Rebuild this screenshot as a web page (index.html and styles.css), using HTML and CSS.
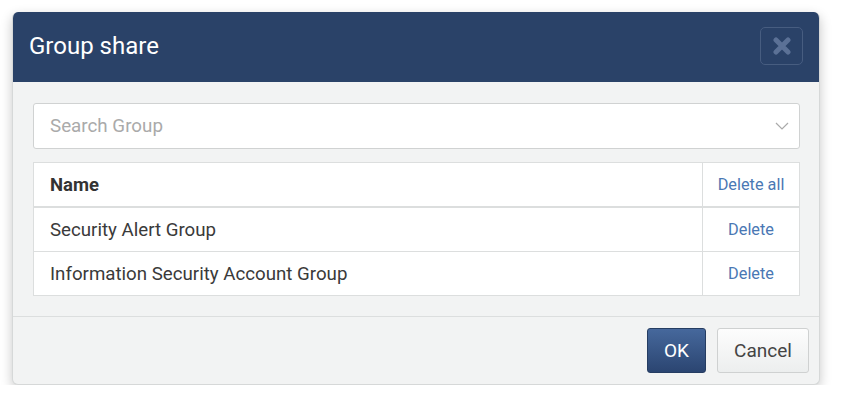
FILE: index.html
```html
<!DOCTYPE html>
<html>
<head>
<meta charset="utf-8">
<title>Group share</title>
<link rel="stylesheet" href="styles.css">
</head>
<body>
<div class="modal">
  <div class="modal-header">
    <h4 class="modal-title">Group share</h4>
    <button class="close-btn" type="button">
      <svg width="18" height="18" viewBox="0 0 18 18"><path d="M3 3 L15 15 M15 3 L3 15" stroke="#5b7196" stroke-width="5" stroke-linecap="round"/></svg>
    </button>
  </div>
  <div class="modal-body">
    <div class="search">
      <span class="placeholder">Search Group</span>
      <svg class="caret" width="14" height="8" viewBox="0 0 14 8"><path d="M1 1 L7 7 L13 1" fill="none" stroke="#aaa" stroke-width="1.2"/></svg>
    </div>
    <table class="groups">
      <colgroup><col><col class="action-col"></colgroup>
      <thead>
        <tr><th class="name">Name</th><th class="action"><a href="#">Delete all</a></th></tr>
      </thead>
      <tbody>
        <tr><td class="name">Security Alert Group</td><td class="action"><a href="#">Delete</a></td></tr>
        <tr><td class="name">Information Security Account Group</td><td class="action"><a href="#">Delete</a></td></tr>
      </tbody>
    </table>
  </div>
  <div class="modal-footer">
    <button class="btn btn-primary" type="button">OK</button>
    <button class="btn btn-default" type="button">Cancel</button>
  </div>
</div>
</body>
</html>
```
FILE: styles.css
```css
body {
  margin: 0;
  background-color: white;
  font-family: Roboto, "Liberation Sans", sans-serif;
  color: #333;
}

.modal {
  margin: 12px 0 0 12px;
  width: 808px;
  border-radius: 6px;
  background-color: #f2f3f3;
  box-shadow: 0 4px 12px rgba(0, 0, 0, 0.22);
  border: 1px solid #d6d8d8;
  border-top: none;
  box-sizing: border-box;
  overflow: hidden;
}

.modal-header {
  height: 70px;
  background-color: #2a4268;
  display: flex;
  align-items: center;
  justify-content: space-between;
  padding: 0 16px 0 16px;
}

.modal-title {
  margin: 0;
  color: white;
  font-size: 24px;
  font-weight: normal;
  margin-bottom: 2px;
}

.close-btn {
  width: 43px;
  height: 38px;
  margin-top: -2px;
  background: transparent;
  border: 1px solid #475d80;
  border-radius: 5px;
  display: flex;
  align-items: center;
  justify-content: center;
  padding: 0;
}

.modal-body {
  padding: 21px 19px 20px 20px;
  border-bottom: 1px solid #dcdede;
}

.search {
  height: 46px;
  background-color: white;
  border: 1px solid #d0d2d2;
  border-radius: 3px;
  box-sizing: border-box;
  display: flex;
  align-items: center;
  justify-content: space-between;
  padding: 0 10px 0 16px;
}

.placeholder {
  color: #aaa;
  font-size: 18.8px;
}

.groups {
  margin-top: 13px;
  width: 100%;
  table-layout: fixed;
  border-collapse: collapse;
  background-color: white;
  font-size: 18.7px;
}

.action-col {
  width: 97px;
}

.groups th, .groups td {
  border: 1px solid #dcdede;
  height: 43px;
  padding: 0 16px;
}

.groups td {
  color: #3a3a3a;
}

.groups th {
  text-align: left;
  border-bottom: 2px solid #dcdede;
  height: 43px;
  font-size: 18.5px;
}

.groups .action {
  text-align: center;
  padding: 0;
  font-size: 16.3px;
  font-weight: normal;
}

.groups a {
  color: #4a78b4;
  text-decoration: none;
}

.modal-footer {
  display: flex;
  justify-content: flex-end;
  gap: 11px;
  padding: 11px 10px 11px 0;
}

.btn {
  height: 45px;
  font-family: Roboto, "Liberation Sans", sans-serif;
  font-size: 19px;
  border-radius: 3px;
  padding: 0;
}

.btn-primary {
  width: 59px;
  color: white;
  background: linear-gradient(#46689c, #2b4571);
  border: 1px solid #263d62;
}

.btn-default {
  width: 92px;
  color: #444;
  background: linear-gradient(#fdfdfd, #eceeee);
  border: 1px solid #cfd1d1;
}
```
